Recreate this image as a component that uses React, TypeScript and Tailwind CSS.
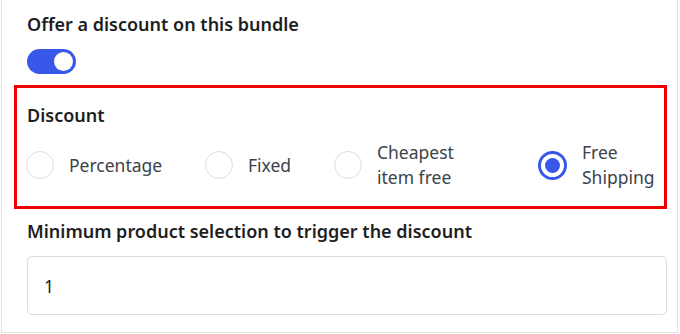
import { useState } from 'react'

const OPTIONS = [
  { id: 'percentage', label: 'Percentage', width: 'w-[179px]' },
  { id: 'fixed', label: 'Fixed', width: 'w-[129px]' },
  { id: 'cheapest', label: 'Cheapest item free', width: 'w-[204px]' },
  { id: 'shipping', label: 'Free Shipping', width: '' },
]

function Toggle({ on, onChange }: { on: boolean; onChange: () => void }) {
  return (
    <button
      type="button"
      role="switch"
      aria-checked={on}
      onClick={onChange}
      className={`flex h-[25px] w-[49px] items-center rounded-full px-[3px] ${
        on ? 'justify-end bg-[#3858e9]' : 'justify-start bg-[#949494]'
      }`}
    >
      <span className="block h-[19px] w-[19px] rounded-full bg-white" />
    </button>
  )
}

function Radio({ checked }: { checked: boolean }) {
  return checked ? (
    <span className="flex h-[29px] w-[29px] shrink-0 items-center justify-center rounded-full border-[3px] border-[#3858e9] bg-white">
      <span className="block h-[15px] w-[15px] rounded-full bg-[#3858e9]" />
    </span>
  ) : (
    <span className="block h-[28px] w-[28px] shrink-0 rounded-full border border-[#dcdcde] bg-white" />
  )
}

export default function App() {
  const [offer, setOffer] = useState(true)
  const [discount, setDiscount] = useState('shipping')
  const [minimum, setMinimum] = useState('1')

  return (
    <div className="h-[334px] w-[680px] overflow-hidden bg-white font-['Noto_Sans',sans-serif] text-[#1e1e1e]">
      <div className="ml-[1px] mt-[-1px] h-[334px] w-[677px] border border-[#e2e2e2] pl-[25px] pr-[10px] pt-[12px]">
        <h2 className="text-[18px] font-semibold leading-[24px]">
          Offer a discount on this bundle
        </h2>
        <div className="mt-[13px]">
          <Toggle on={offer} onChange={() => setOffer(!offer)} />
        </div>

        <div className="ml-[-13px] mt-[11px] h-[124px] w-[653px] border-[3px] border-[#ee0000] pl-[10px] pt-[15px]">
          <h3 className="text-[18px] font-semibold leading-[24px]">Discount</h3>
          <div className="ml-[-1px] mt-[13px] flex items-center">
            {OPTIONS.map((option) => (
              <label
                key={option.id}
                className={`flex shrink-0 cursor-pointer items-center gap-[15px] ${option.width}`}
                onClick={() => setDiscount(option.id)}
              >
                <Radio checked={discount === option.id} />
                <span
                  className={`text-[17.5px] leading-[25px] text-[#3c434a] ${
                    option.id === 'cheapest' || option.id === 'shipping'
                      ? 'w-[86px]'
                      : ''
                  }`}
                >
                  {option.label}
                </span>
              </label>
            ))}
          </div>
        </div>

        <h3 className="mt-[10px] text-[18px] font-semibold leading-[24px]">
          Minimum product selection to trigger the discount
        </h3>
        <input
          type="text"
          value={minimum}
          onChange={(event) => setMinimum(event.target.value)}
          className="mt-[13px] block h-[59px] w-[640px] rounded-[5px] border border-[#dcdcde] bg-white px-[16px] text-[17.5px] text-[#1e1e1e] outline-none"
        />
      </div>
    </div>
  )
}
